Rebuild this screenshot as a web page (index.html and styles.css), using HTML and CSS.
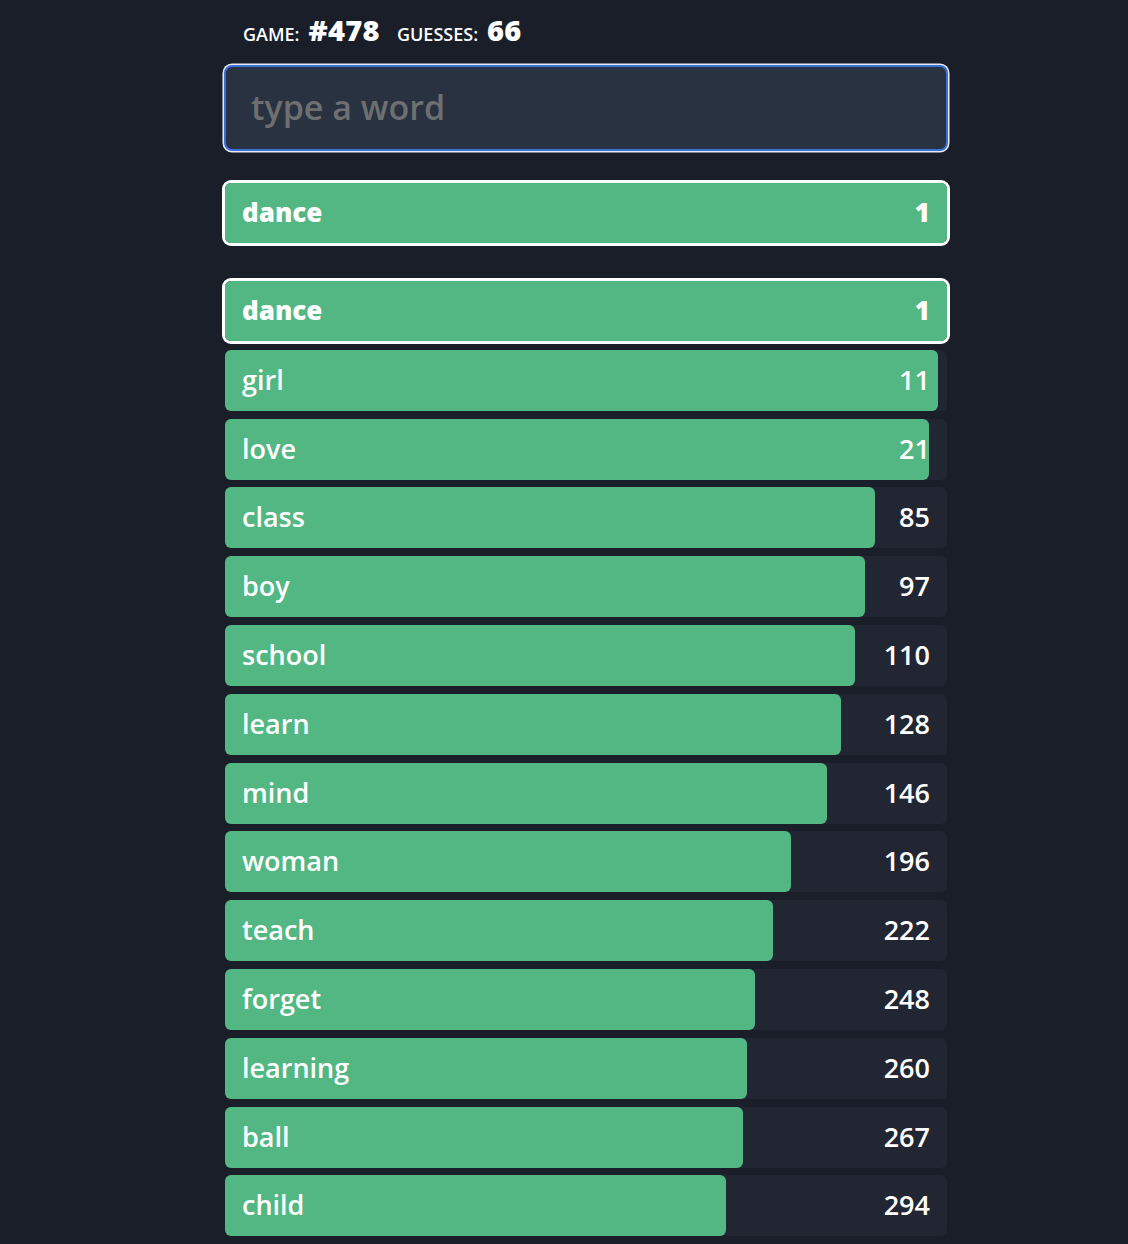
FILE: index.html
```html
<!DOCTYPE html>
<html>
<head>
<meta charset="utf-8">
<link rel="stylesheet" href="styles.css">
</head>
<body>
<main class="app">
  <div class="stats">
    <span class="label">Game:</span><span class="value">#478</span>
    <span class="label">Guesses:</span><span class="value">66</span>
  </div>
  <input class="guess-input" type="text" placeholder="type a word">
  <div class="latest">
    <div class="row highlight"><div class="bar" style="width:100%"></div><span class="word">dance</span><span class="rank">1</span></div>
  </div>
  <div class="list">
    <div class="row highlight"><div class="bar" style="width:100%"></div><span class="word">dance</span><span class="rank">1</span></div>
    <div class="row"><div class="bar" style="width:713px"></div><span class="word">girl</span><span class="rank">11</span></div>
    <div class="row"><div class="bar" style="width:704px"></div><span class="word">love</span><span class="rank">21</span></div>
    <div class="row"><div class="bar" style="width:650px"></div><span class="word">class</span><span class="rank">85</span></div>
    <div class="row"><div class="bar" style="width:640px"></div><span class="word">boy</span><span class="rank">97</span></div>
    <div class="row"><div class="bar" style="width:630px"></div><span class="word">school</span><span class="rank">110</span></div>
    <div class="row"><div class="bar" style="width:616px"></div><span class="word">learn</span><span class="rank">128</span></div>
    <div class="row"><div class="bar" style="width:602px"></div><span class="word">mind</span><span class="rank">146</span></div>
    <div class="row"><div class="bar" style="width:566px"></div><span class="word">woman</span><span class="rank">196</span></div>
    <div class="row"><div class="bar" style="width:548px"></div><span class="word">teach</span><span class="rank">222</span></div>
    <div class="row"><div class="bar" style="width:530px"></div><span class="word">forget</span><span class="rank">248</span></div>
    <div class="row"><div class="bar" style="width:522px"></div><span class="word">learning</span><span class="rank">260</span></div>
    <div class="row"><div class="bar" style="width:518px"></div><span class="word">ball</span><span class="rank">267</span></div>
    <div class="row"><div class="bar" style="width:501px"></div><span class="word">child</span><span class="rank">294</span></div>
  </div>
</main>
</body>
</html>
```
FILE: styles.css
```css
html, body {
  margin: 0;
  padding: 0;
  background: #191e29;
  color: #fff;
  font-family: "Open Sans", "Lato", sans-serif;
}
.app {
  width: 722px;
  margin-left: 225px;
  padding-top: 10px;
}
.stats {
  display: flex;
  align-items: baseline;
  padding-left: 18px;
  height: 38px;
}
.label {
  font-size: 18px;
  font-weight: 600;
  text-transform: uppercase;
  margin-right: 9px;
}
.value {
  font-size: 29px;
  font-weight: 800;
  margin-right: 17px;
  letter-spacing: 0.3px;
}
.guess-input {
  display: block;
  box-sizing: border-box;
  width: 724px;
  margin: 17px 0 0 -1px;
  height: 86px;
  background: #283241;
  border: 2px solid #3a6fd8;
  box-shadow: 0 0 0 1.5px #e6e9f0;
  border-radius: 8px;
  padding: 0 25px 3px;
  font-family: inherit;
  font-size: 34px;
  font-weight: 600;
  color: #fff;
  outline: none;
}
.guess-input::placeholder {
  color: #6e6f70;
}
.latest {
  margin-top: 32px;
}
.list {
  margin-top: 38px;
  display: flex;
  flex-direction: column;
  gap: 7.8px;
}
.row {
  position: relative;
  height: 61px;
  background: #212632;
  border-radius: 6px;
  display: flex;
  align-items: center;
  justify-content: space-between;
  padding: 0 17px;
  font-size: 27px;
  font-weight: 600;
  line-height: 1;
}
.row.highlight {
  height: 60px;
  box-shadow: 0 0 0 3px #fff;
  font-size: 26px;
  font-weight: 800;
}
.list .row.highlight {
  margin-bottom: 1px;
}
.bar {
  position: absolute;
  left: 0;
  top: 0;
  bottom: 0;
  background: #52b783;
  border-radius: 6px;
}
.word, .rank {
  position: relative;
  top: -1px;
}
```
